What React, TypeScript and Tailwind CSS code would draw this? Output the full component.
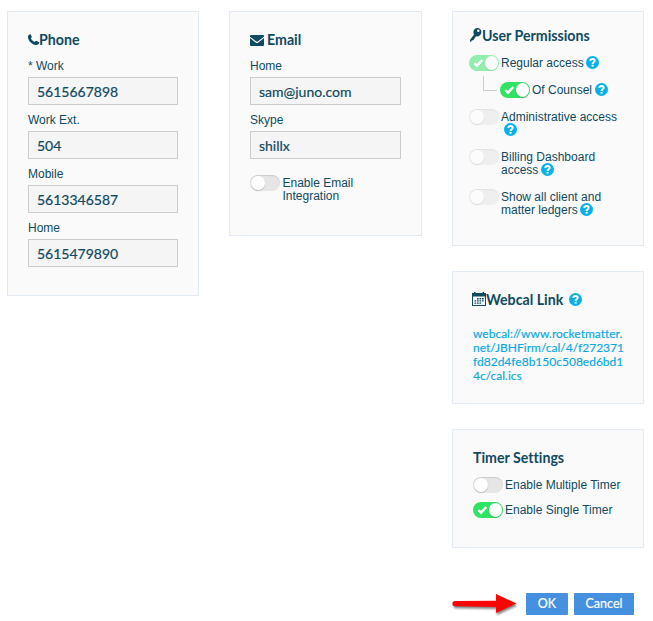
import type { ReactNode } from "react";

/* ── Icons ── */

function PhoneIcon() {
    return (
        <svg width="12" height="12" viewBox="0 0 12 12" className="-mr-px" aria-hidden="true">
            <path
                fill="currentColor"
                d="M.5 1.200 1.500.400c.5-.3 1-.2 1.300.2l.9 1.900c.2.400.1.800-.2 1.100L2.900 4.200c.7 1.700 2.100 3 3.900 3.700l.9-.8c.3-.2.700-.300 1-.1l2.100.9c.4.200.7.700.4 1.200-.5 1.400-1.900 2.100-3.200 1.900C4 10.500.1 6.800 0 2.900 0 2.200.1 1.600.5 1.200z"
            />
        </svg>
    );
}

function CheckIcon() {
    return (
        <svg width="11" height="10" viewBox="0 0 11 10" className="mr-px shrink-0" aria-hidden="true">
            <path d="M1.300 5.200 4 7.700 9.300 2" fill="none" stroke="#fff" strokeWidth="2.500" />
        </svg>
    );
}

function EnvelopeIcon() {
    return (
        <svg width="14" height="11" viewBox="0 0 14 11" className="mr-[3px] mt-px" aria-hidden="true">
            <path
                fill="currentColor"
                d="M1 0h12a1 1 0 0 1 1 1v.8L7.600 6.500a1 1 0 0 1-1.200 0L0 1.800V1a1 1 0 0 1 1-1zM0 3l5.600 4.400a2.200 2.200 0 0 0 2.800 0L14 3V10a1 1 0 0 1-1 1H1a1 1 0 0 1-1-1z"
            />
        </svg>
    );
}

function KeyIcon() {
    return (
        <svg width="12" height="14" viewBox="0 0 12 14" className="-mt-0.5" aria-hidden="true">
            <path
                fill="currentColor"
                fillRule="evenodd"
                d="M7.400 0C9.900 0 11.400 1.900 11.400 4.100S9.700 8.500 7.300 8.500c-.5 0-.9-.1-1.300-.2L3.500 12l-1.700.5L.9 13.700H0v-1.800L4 6.500C3.600 5.800 3.400 5 3.400 4 3.400 1.700 5.200 0 7.400 0zM8.300 1.500a1.300 1.300 0 1 0 0 2.600 1.300 1.300 0 0 0 0-2.600z"
            />
        </svg>
    );
}

function CalendarIcon() {
    return (
        <svg width="14" height="14" viewBox="0 0 14 14" className="-mt-0.5" aria-hidden="true">
            <path
                fill="currentColor"
                fillRule="evenodd"
                d="M0 1h2V0h1.500v1h7V0H12v1h2v13H0zM1 4.500V13h12V4.500z"
            />
            <path
                fill="currentColor"
                d="M5 6h1.700v1.400H5zM7.500 6h1.700v1.400H7.500zM10 6h1.700v1.400H10zM2.500 8.200h1.700v1.400H2.500zM5 8.200h1.700v1.400H5zM7.500 8.200h1.700v1.400H7.500zM10 8.200h1.700v1.400H10zM2.500 10.400h1.700v1.400H2.500zM5 10.400h1.700v1.400H5zM7.500 10.400h1.700v1.400H7.500z"
            />
        </svg>
    );
}

function Help({ className = "" }: { className?: string }) {
    return (
        <svg
            width="13"
            height="13"
            viewBox="0 0 13 13"
            className={`inline-block shrink-0 align-[-2px] ${className}`}
            aria-hidden="true"
        >
            <circle cx="6.5" cy="6.5" r="6.5" fill="#08b0e8" />
            <path
                d="M4.200 4.900C4.400 3.600 5.300 3 6.500 3c1.300 0 2.200.7 2.200 1.800 0 1.500-2.100 1.500-2.100 3.100"
                fill="none"
                stroke="#fff"
                strokeWidth="2"
            />
            <rect x="5.600" y="8.800" width="2" height="1.800" fill="#fff" />
        </svg>
    );
}

function Arrow() {
    return (
        <svg width="70" height="28" viewBox="0 0 70 28" className="mr-1.5 shrink-0" aria-hidden="true">
            <path
                d="M5 11 46 10.800V4L66.500 13.500 46 23V17L5 16.200A2.600 2.600 0 0 1 5 11z"
                fill="#f90505"
                className="drop-shadow-[1px_2px_1px_rgba(0,0,0,0.5)]"
            />
        </svg>
    );
}

/* ── Building blocks ── */

function Card({ className = "", children }: { className?: string; children: ReactNode }) {
    return <section className={`border border-[#e2eaf6] bg-[#fafafa] px-5 ${className}`}>{children}</section>;
}

function Title({ className = "", children }: { className?: string; children: ReactNode }) {
    return (
        <h2
            className={`flex h-5 items-center whitespace-nowrap font-['Lato',sans-serif] text-[14.2px] font-bold ${className}`}
        >
            {children}
        </h2>
    );
}

function Field({ label, value }: { label: string; value: string }) {
    return (
        <label className="block h-[54px]">
            <span className="block h-[18px] leading-[14px]">{label}</span>
            <input
                readOnly
                value={value}
                className="block h-7 w-full border border-[#cccccc] bg-[#f5f5f5] px-2 font-['Lato',sans-serif] text-sm outline-none [-webkit-text-stroke:0.2px]"
            />
        </label>
    );
}

function Toggle({ on = false, disabled = false }: { on?: boolean; disabled?: boolean }) {
    return (
        <span
            className={`flex h-4 w-[30px] shrink-0 items-center rounded-full px-px ${
                on ? "justify-end bg-[#2fe463]" : "bg-[#e6e6e6] shadow-[inset_0_1px_1px_rgba(0,0,0,0.12)]"
            } ${disabled ? "opacity-50" : ""}`}
        >
            {on && <CheckIcon />}
            <span className="size-[13.5px] shrink-0 rounded-full bg-white shadow-[0_1px_1px_rgba(0,0,0,0.2)]" />
        </span>
    );
}

export default function App() {
    return (
        <div className="flex h-[621px] w-[653px] flex-col bg-white pl-[7px] pt-[11px] font-['Liberation_Sans',Arial,sans-serif] text-xs text-[#0f4a60] [font-variant-ligatures:none]">
            <div className="flex items-start">
                <Card className="h-[285px] w-48 pt-[18px]">
                    <Title>
                        <PhoneIcon />
                        Phone
                    </Title>
                    <div className="pt-[9px]">
                        <Field label="* Work" value="5615667898" />
                        <Field label="Work Ext." value="504" />
                        <Field label="Mobile" value="5613346587" />
                        <Field label="Home" value="5615479890" />
                    </div>
                </Card>

                <Card className="ml-[30px] h-[225px] w-[193px] pt-[18px]">
                    <Title>
                        <EnvelopeIcon />
                        Email
                    </Title>
                    <div className="pt-[9px]">
                        <Field label="Home" value="sam@juno.com" />
                        <Field label="Skype" value="shillx" />
                    </div>
                    <div className="mt-2 flex">
                        <Toggle />
                        <span className="ml-[2.5px] mt-0.5 leading-[13px]">
                            Enable Email
                            <br />
                            Integration
                        </span>
                    </div>
                </Card>

                <div className="ml-[30px] flex w-48 flex-col">
                    {/* User permissions */}
                    <Card className="h-[235px] pt-[14px]">
                        <Title className="-ml-[3px]">
                            <KeyIcon />
                            <span>User Permissions</span>
                        </Title>
                        <div className="-ml-1 -mr-4 pt-[9px] leading-[13px]">
                            <div className="flex h-[27px]">
                                <Toggle on disabled />
                                <span className="ml-0.5 mt-0.5">
                                    Regular access <Help className="-ml-px -mt-0.5" />
                                </span>
                            </div>
                            <div className="flex h-[27px]">
                                <span className="-mt-1.5 ml-[14px] mr-[3px] h-[15px] w-[14px] border-b border-l border-[#cccccc]" />
                                <Toggle on />
                                <span className="ml-0.5 mt-0.5">
                                    Of Counsel <Help className="-mt-0.5" />
                                </span>
                            </div>
                            <div className="flex h-10">
                                <Toggle disabled />
                                <span className="ml-0.5 mt-0.5">
                                    Administrative access
                                    <br />
                                    <Help className="-mt-0.5 ml-[3px]" />
                                </span>
                            </div>
                            <div className="flex h-10">
                                <Toggle disabled />
                                <span className="ml-0.5 mt-0.5">
                                    Billing Dashboard
                                    <br />
                                    access <Help className="-ml-px -mt-0.5" />
                                </span>
                            </div>
                            <div className="flex">
                                <Toggle disabled />
                                <span className="ml-0.5 mt-0.5">
                                    Show all client and
                                    <br />
                                    matter ledgers <Help className="-ml-px -mt-0.5" />
                                </span>
                            </div>
                        </div>
                    </Card>

                    {/* Webcal */}
                    <Card className="mt-[25px] h-[133px] pt-[18px]">
                        <Title className="-ml-px">
                            <CalendarIcon />
                            Webcal Link
                            <Help className="-mt-px ml-1.5" />
                        </Title>
                        <a className="mt-[17px] block whitespace-nowrap font-['Lato',sans-serif] leading-[14px] text-[#08a8e0] [-webkit-text-stroke:0.15px]">
                            webcal://www.rocketmatter.
                            <br />
                            net/JBHFirm/cal/4/f272371
                            <br />
                            fd82d4fe8b150c508ed6bd1
                            <br />
                            4c/cal.ics
                        </a>
                    </Card>

                    {/* Timers */}
                    <Card className="mt-[25px] h-[119px] pt-[18px]">
                        <Title>Timer Settings</Title>
                        <div className="flex flex-col gap-[9px] whitespace-nowrap pt-[9px]">
                            <div className="flex h-4 items-center">
                                <Toggle />
                                <span className="ml-0.5">Enable Multiple Timer</span>
                            </div>
                            <div className="flex h-4 items-center">
                                <Toggle on />
                                <span className="ml-0.5">Enable Single Timer</span>
                            </div>
                        </div>
                    </Card>
                </div>
            </div>

            <div className="mt-[42px] flex h-7 items-center justify-end pr-[19px] font-['Lato',sans-serif] text-[12.5px] text-white">
                <Arrow />
                <button className="h-[22px] w-[42px] rounded-[1px] bg-[#4591e0] [-webkit-text-stroke:0.2px]">OK</button>
                <button className="ml-1.5 h-[22px] w-[60px] rounded-[1px] bg-[#4591e0] [-webkit-text-stroke:0.2px]">
                    Cancel
                </button>
            </div>
        </div>
    );
}
